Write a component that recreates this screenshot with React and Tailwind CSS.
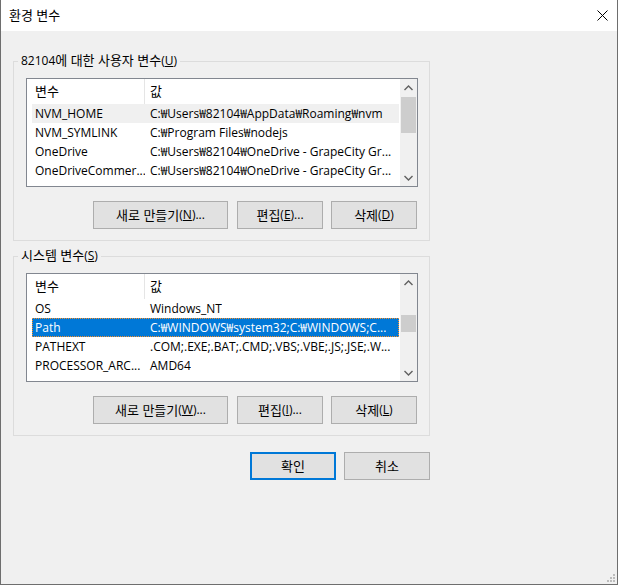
import React from "react";

const userRows = [
  ["NVM_HOME", "C:₩Users₩82104₩AppData₩Roaming₩nvm", "hover"],
  ["NVM_SYMLINK", "C:₩Program Files₩nodejs"],
  ["OneDrive", "C:₩Users₩82104₩OneDrive - GrapeCity Gr..."],
  ["OneDriveCommer...", "C:₩Users₩82104₩OneDrive - GrapeCity Gr..."],
];

const systemRows = [
  ["OS", "Windows_NT"],
  ["Path", "C:₩WINDOWS₩system32;C:₩WINDOWS;C...", "selected"],
  ["PATHEXT", ".COM;.EXE;.BAT;.CMD;.VBS;.VBE;.JS;.JSE;.W..."],
  ["PROCESSOR_ARC...", "AMD64"],
];

// korean text runs a little larger, like Malgun Gothic
const K = ({ children }) => <span className="text-[13px] leading-none">{children}</span>;

const Chevron = ({ up }) => (
  <svg width="9" height="6" viewBox="0 0 9 6">
    <path
      d={up ? "M0.5 5 L4.5 1 L8.5 5" : "M0.5 1 L4.5 5 L8.5 1"}
      fill="none"
      stroke="#606060"
      strokeWidth="1.4"
    />
  </svg>
);

const ListBox = ({ rows, thumbTop, thumbHeight }) => (
  <div className="h-[109px] border border-[#828790] bg-white flex overflow-hidden">
    <div className="w-[372px] pl-[5px] flex flex-col overflow-hidden">
      <div className="h-[25px] shrink-0 flex">
        <div className="w-[113px] pl-[3px] flex items-center border-r border-[#e5e5e5]">
          <K>변수</K>
        </div>
        <div className="pl-[5px] flex items-center">
          <K>값</K>
        </div>
      </div>
      {rows.map(([name, value, state]) => (
        <div
          key={name + value}
          className={`h-[19px] shrink-0 flex items-center whitespace-nowrap ${
            state === "selected"
              ? "bg-[#0078d7] text-white outline-1 outline-dotted outline-[#f7902b] -outline-offset-1"
              : state === "hover"
              ? "bg-[#f0f0f0]"
              : ""
          }`}
        >
          <div className="w-[113px] shrink-0 pl-[3px] overflow-hidden">{name}</div>
          <div className="pl-[5px] overflow-hidden">{value}</div>
        </div>
      ))}
    </div>
    <div className="ml-[1px] w-[17px] bg-[#f0f0f0] flex flex-col">
      <div className="h-[17px] flex items-center justify-center">
        <Chevron up />
      </div>
      <div className="flex-1">
        <div className="mx-[1px] bg-[#cdcdcd]" style={{ marginTop: thumbTop, height: thumbHeight }} />
      </div>
      <div className="h-[17px] flex items-center justify-center">
        <Chevron />
      </div>
    </div>
  </div>
);

const Button = ({ children, width, primary }) => (
  <button
    className={`h-[28px] bg-[#e1e1e1] flex items-center justify-center ${width} ${
      primary ? "border-2 border-[#0078d7]" : "border border-[#adadad]"
    }`}
  >
    {children}
  </button>
);

const Group = ({ label, rows, thumbTop, thumbHeight, buttons, className }) => (
  <fieldset className={`border border-[#dcdcdc] ${className}`}>
    <legend className="ml-[4px] px-[3px] h-[16px] leading-[16px]">{label}</legend>
    <div className="pt-[9px] pl-[12px] pr-[11px] pb-[11px]">
      <ListBox rows={rows} thumbTop={thumbTop} thumbHeight={thumbHeight} />
      <div className="mt-[14px] mr-[1px] flex justify-end gap-[9px]">
        <Button width="w-[135px]">{buttons[0]}</Button>
        <div className="flex gap-[8px]">
          <Button width="w-[86px]">{buttons[1]}</Button>
          <Button width="w-[86px]">{buttons[2]}</Button>
        </div>
      </div>
    </div>
  </fieldset>
);

export default function App() {
  return (
    <div className="w-[618px] h-[585px] relative flex flex-col bg-[#f0f0f0] border-x border-b border-[#6e6e6e] text-[12px] text-black font-['Open_Sans','Noto_Sans_CJK_KR',sans-serif] overflow-hidden">
      <div className="h-[31px] shrink-0 bg-white flex items-center justify-between pl-[8px] pr-[9px]">
        <K>환경 변수</K>
        <svg width="11" height="11" viewBox="0 0 11 11">
          <path d="M0.5 0.5 L10.5 10.5 M10.5 0.5 L0.5 10.5" stroke="#000" strokeWidth="1" />
        </svg>
      </div>

      <div className="ml-[12px] w-[417px] flex flex-col">
        <Group
          className="mt-[22px]"
          label={<>82104<K>에 대한 사용자 변수</K>(<u>U</u>)</>}
          rows={userRows}
          thumbTop={1}
          thumbHeight={36}
          buttons={[
            <><K>새로 만들기</K>(<u>N</u>)...</>,
            <><K>편집</K>(<u>E</u>)...</>,
            <><K>삭제</K>(<u>D</u>)</>,
          ]}
        />
        <Group
          className="mt-[7px]"
          label={<><K>시스템 변수</K>(<u>S</u>)</>}
          rows={systemRows}
          thumbTop={24}
          thumbHeight={17}
          buttons={[
            <><K>새로 만들기</K>(<u>W</u>)...</>,
            <><K>편집</K>(<u>I</u>)...</>,
            <><K>삭제</K>(<u>L</u>)</>,
          ]}
        />
        <div className="mt-[16px] flex justify-end gap-[8px]">
          <Button width="w-[86px]" primary>
            <K>확인</K>
          </Button>
          <Button width="w-[86px]">
            <K>취소</K>
          </Button>
        </div>
      </div>

      <svg className="absolute right-[1px] bottom-[1px]" width="10" height="10" viewBox="0 0 10 10">
        <rect x="7" y="1" width="2" height="2" fill="#bcbcbc" />
        <rect x="4" y="4" width="2" height="2" fill="#bcbcbc" />
        <rect x="7" y="4" width="2" height="2" fill="#bcbcbc" />
        <rect x="1" y="7" width="2" height="2" fill="#bcbcbc" />
        <rect x="4" y="7" width="2" height="2" fill="#bcbcbc" />
        <rect x="7" y="7" width="2" height="2" fill="#bcbcbc" />
      </svg>
    </div>
  );
}
